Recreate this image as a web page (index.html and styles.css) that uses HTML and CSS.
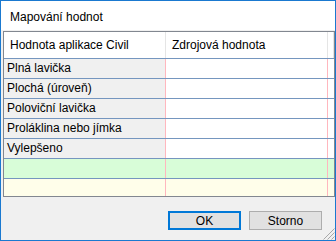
FILE: index.html
```html
<!DOCTYPE html>
<html>
<head>
<meta charset="utf-8">
<link rel="stylesheet" href="styles.css">
</head>
<body>
<div class="window">
  <div class="title">Mapování hodnot</div>
  <div class="content">
    <div class="grid">
      <div class="row head"><div class="c1">Hodnota aplikace Civil</div><div class="c2">Zdrojová hodnota</div><div class="c3"></div></div>
      <div class="row"><div class="c1">Plná lavička</div><div class="c2"></div><div class="c3"></div></div>
      <div class="row"><div class="c1">Plochá (úroveň)</div><div class="c2"></div><div class="c3"></div></div>
      <div class="row"><div class="c1">Poloviční lavička</div><div class="c2"></div><div class="c3"></div></div>
      <div class="row"><div class="c1">Proláklina nebo jímka</div><div class="c2"></div><div class="c3"></div></div>
      <div class="row"><div class="c1">Vylepšeno</div><div class="c2"></div><div class="c3"></div></div>
      <div class="row green"><div class="c1"></div><div class="c2"></div><div class="c3"></div></div>
      <div class="row yellow"><div class="c1"></div><div class="c2"></div><div class="c3"></div></div>
    </div>
    <div class="buttons">
      <button class="btn default">OK</button>
      <button class="btn">Storno</button>
    </div>
  </div>
  <svg class="grip" width="12" height="12" viewBox="0 0 12 12">
    <path d="M11.5 0.5 L0.5 11.5 M11.5 4.5 L4.5 11.5 M11.5 8.5 L8.5 11.5" stroke="#a8a8a8" stroke-width="1" fill="none"/>
  </svg>
</div>
</body>
</html>
```

FILE: styles.css
```css
* { box-sizing: border-box; }
html, body { margin: 0; padding: 0; }
body {
  font-family: "Liberation Sans", Arial, sans-serif;
  font-size: 12px;
  color: #000;
  background: #f0f0f0;
}
.window {
  position: relative;
  width: 336px;
  height: 241px;
  border: 1px solid #1a79d0;
  background: #f0f0f0;
  display: flex;
  flex-direction: column;
}
.title {
  height: 29px;
  background: #fff;
  padding-left: 9px;
  line-height: 32px;
}
.content {
  flex: 1;
  padding: 1px 0 0 2px;
  display: flex;
  flex-direction: column;
}
.grid {
  height: 166px;
  border: 1px solid #828790;
  background: #fff;
  overflow: hidden;
}
.row {
  display: flex;
  height: 20px;
  border-bottom: 1px solid #7596bf;
  line-height: 19px;
}
.row .c1 {
  width: 162px;
  padding-left: 3px;
  background: #f0f0f0;
  border-right: 1px solid #ffb7be;
  white-space: nowrap;
}
.row .c2 {
  width: 162px;
  background: #fff;
  border-right: 1px solid #ffb7be;
}
.row .c3 {
  flex: 1;
  background: #fff;
}
.row.head {
  height: 27px;
  line-height: 26px;
}
.row.head .c1, .row.head .c2 {
  background: #fff;
  padding-left: 6px;
  border-right-color: #e5e5e5;
}
.row.head .c3 { border-right: 1px solid #e5e5e5; }
.row.green .c1, .row.green .c2, .row.green .c3 { background: #d8fdd8; }
.row.yellow .c1, .row.yellow .c2, .row.yellow .c3 { background: #fffeea; }
.buttons {
  display: flex;
  justify-content: flex-end;
  gap: 8px;
  padding: 14px 13px 0 0;
}
.btn {
  width: 73px;
  height: 19px;
  font-family: "Liberation Sans", Arial, sans-serif;
  font-size: 12px;
  color: #000;
  background: #e1e1e1;
  border: 1px solid #adadad;
  padding: 0;
  margin: 0;
  line-height: 16px;
}
.btn.default {
  border: 2px solid #0078d7;
}
.grip {
  position: absolute;
  right: 0;
  bottom: 0;
}
```
